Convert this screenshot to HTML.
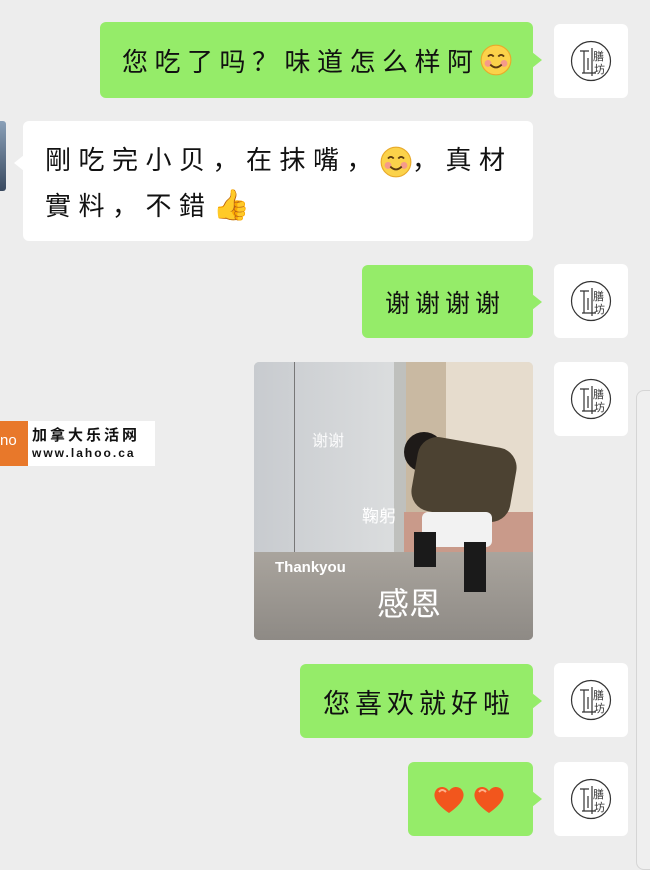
<!DOCTYPE html>
<html><head><meta charset="utf-8"><style>
*{margin:0;padding:0;box-sizing:border-box}
body{width:650px;height:848px;background:#ededed;position:relative;overflow:hidden;font-family:"Liberation Sans","Noto Sans CJK SC",sans-serif;color:#111}
.b{position:absolute;border-radius:6px;font-size:26px;letter-spacing:6px;display:flex;align-items:center;white-space:nowrap}
.g{background:#95ec69}
.w{background:#fff}
.g:after{content:"";position:absolute;right:-9px;top:50%;margin-top:-8px;border-left:10px solid #95ec69;border-top:8px solid transparent;border-bottom:8px solid transparent}
.w:before{content:"";position:absolute;left:-9px;top:34px;border-right:10px solid #fff;border-top:8px solid transparent;border-bottom:8px solid transparent}
.av{position:absolute;left:554px;width:74px;height:74px;background:#fff;border-radius:6px}
.av svg{position:absolute;left:16px;top:16px}
.e{display:inline-block;vertical-align:middle}
</style></head><body>
<svg width="0" height="0" style="position:absolute"><defs>
<g id="seal"><circle cx="21" cy="21" r="19.5" fill="none" stroke="#333" stroke-width="1.2"/>
<path d="M10 11h9M14 11v22M12 33h14M18 18v12M22 8v28" stroke="#333" stroke-width="1.2" fill="none"/>
<text x="23" y="20" font-size="11" font-family="Noto Sans CJK SC" fill="#333">膳</text>
<text x="24" y="33" font-size="11" font-family="Noto Sans CJK SC" fill="#333">坊</text></g>
<g id="smile"><circle cx="14" cy="14" r="13" fill="#fbd24a" stroke="#e8a92a"/><circle cx="7" cy="17" r="3" fill="#f59a8a"/><circle cx="21" cy="17" r="3" fill="#f59a8a"/><path d="M7 11q2.5-3 5 0M16 11q2.5-3 5 0M9 18q5 5 10 0" stroke="#5a3a10" stroke-width="1.6" fill="none"/></g>
<g id="heart"><path d="M17 30C4 21 1 14 3 9 5 3 13 2 17 8 21 2 29 3 31 9 33 14 30 21 17 30z" fill="#f2561d"/><path d="M7 9q3-4 7 0" stroke="#ffb08a" stroke-width="2" fill="none"/></g>
</defs></svg>

<div class="b g" style="left:100px;top:22px;width:433px;height:76px;padding-left:22px;letter-spacing:6.5px">您吃了吗？味道怎么样阿<svg class="e" width="32" height="32" viewBox="0 0 28 28"><use href="#smile"/></svg></div>
<div class="av" style="top:24px"><svg width="42" height="42"><use href="#seal"/></svg></div>

<div style="position:absolute;left:0;top:121px;width:6px;height:70px;background:linear-gradient(#8aa0b8,#3a4a60);border-radius:0 3px 3px 0"></div>
<div class="b w" style="left:23px;top:121px;width:510px;height:120px;padding:16px 0 0 22px;display:block;line-height:46px;white-space:normal;letter-spacing:7.5px">剛吃完小贝，在抹嘴，<svg class="e" width="32" height="32" viewBox="0 0 28 28"><use href="#smile"/></svg>，真材<br>實料，不錯<span style="font-size:30px;letter-spacing:0">👍</span></div>

<div class="b g" style="left:362px;top:265px;width:171px;height:73px;padding-left:23px;font-size:25px;letter-spacing:5px">谢谢谢谢</div>
<div class="av" style="top:264px"><svg width="42" height="42"><use href="#seal"/></svg></div>

<div style="position:absolute;left:254px;top:362px;width:279px;height:278px;border-radius:5px;overflow:hidden;background:linear-gradient(180deg,#d9d7d2 0%,#cfcdc8 60%,#8a8580 100%)">
<div style="position:absolute;left:0;top:0;width:150px;height:205px;background:linear-gradient(90deg,#c8cbcf,#dcdedf)"></div>
<div style="position:absolute;left:40px;top:0;width:1px;height:190px;background:#777"></div>
<div style="position:absolute;left:140px;top:0;width:12px;height:190px;background:#bfc0bd"></div>
<div style="position:absolute;left:152px;top:0;width:40px;height:200px;background:#c9b9a2"></div>
<div style="position:absolute;left:192px;top:0;width:87px;height:150px;background:#e6dccd"></div>
<div style="position:absolute;left:150px;top:150px;width:129px;height:50px;background:#c99a8a"></div>
<div style="position:absolute;left:0;top:190px;width:279px;height:88px;background:linear-gradient(#a9a49d,#8e8a85)"></div>
<div style="position:absolute;left:150px;top:70px;width:40px;height:40px;border-radius:50%;background:#1e1a18"></div>
<div style="position:absolute;left:160px;top:80px;width:100px;height:75px;border-radius:20px;background:#4c4232;transform:rotate(10deg)"></div>
<div style="position:absolute;left:168px;top:150px;width:70px;height:35px;background:#f2f2f2;border-radius:6px"></div>
<div style="position:absolute;left:160px;top:170px;width:22px;height:35px;background:#1a1a1a"></div>
<div style="position:absolute;left:210px;top:180px;width:22px;height:50px;background:#1a1a1a"></div>
<div style="position:absolute;left:58px;top:65px;color:#fff;font-size:16px;font-family:'Noto Sans CJK SC';opacity:.9">谢谢</div>
<div style="position:absolute;left:108px;top:140px;color:#fff;font-size:17px;font-family:'Noto Sans CJK SC'">鞠躬</div>
<div style="position:absolute;left:21px;top:197px;color:#fff;font-size:15px;font-weight:bold">Thankyou</div>
<div style="position:absolute;left:123px;top:217px;color:#fff;font-size:32px;font-family:'Noto Sans CJK SC'">感恩</div>
</div>
<div class="av" style="top:362px"><svg width="42" height="42"><use href="#seal"/></svg></div>

<div style="position:absolute;left:636px;top:390px;width:30px;height:480px;border:1px solid #d5d5d5;border-radius:8px;background:#efefef"></div>

<div style="position:absolute;left:0;top:421px;width:155px;height:45px;background:#fff">
<div style="position:absolute;left:0;top:0;width:28px;height:45px;background:#e8782a;color:#fff;font-size:15px;line-height:40px;overflow:hidden">no</div>
<div style="position:absolute;left:32px;top:3px;font-size:15px;font-weight:bold;letter-spacing:3px;font-family:'Noto Sans CJK SC'">加拿大乐活网</div>
<div style="position:absolute;left:32px;top:25px;font-size:12px;font-weight:bold;letter-spacing:2px">www.lahoo.ca</div>
</div>

<div class="b g" style="left:300px;top:664px;width:233px;height:74px;padding-left:23px;font-size:27px;letter-spacing:5px">您喜欢就好啦</div>
<div class="av" style="top:663px"><svg width="42" height="42"><use href="#seal"/></svg></div>

<div class="b g" style="left:408px;top:762px;width:125px;height:74px;padding-left:24px;gap:6px"><svg width="34" height="32"><use href="#heart"/></svg><svg width="34" height="32"><use href="#heart"/></svg></div>
<div class="av" style="top:762px"><svg width="42" height="42"><use href="#seal"/></svg></div>
</body></html>
